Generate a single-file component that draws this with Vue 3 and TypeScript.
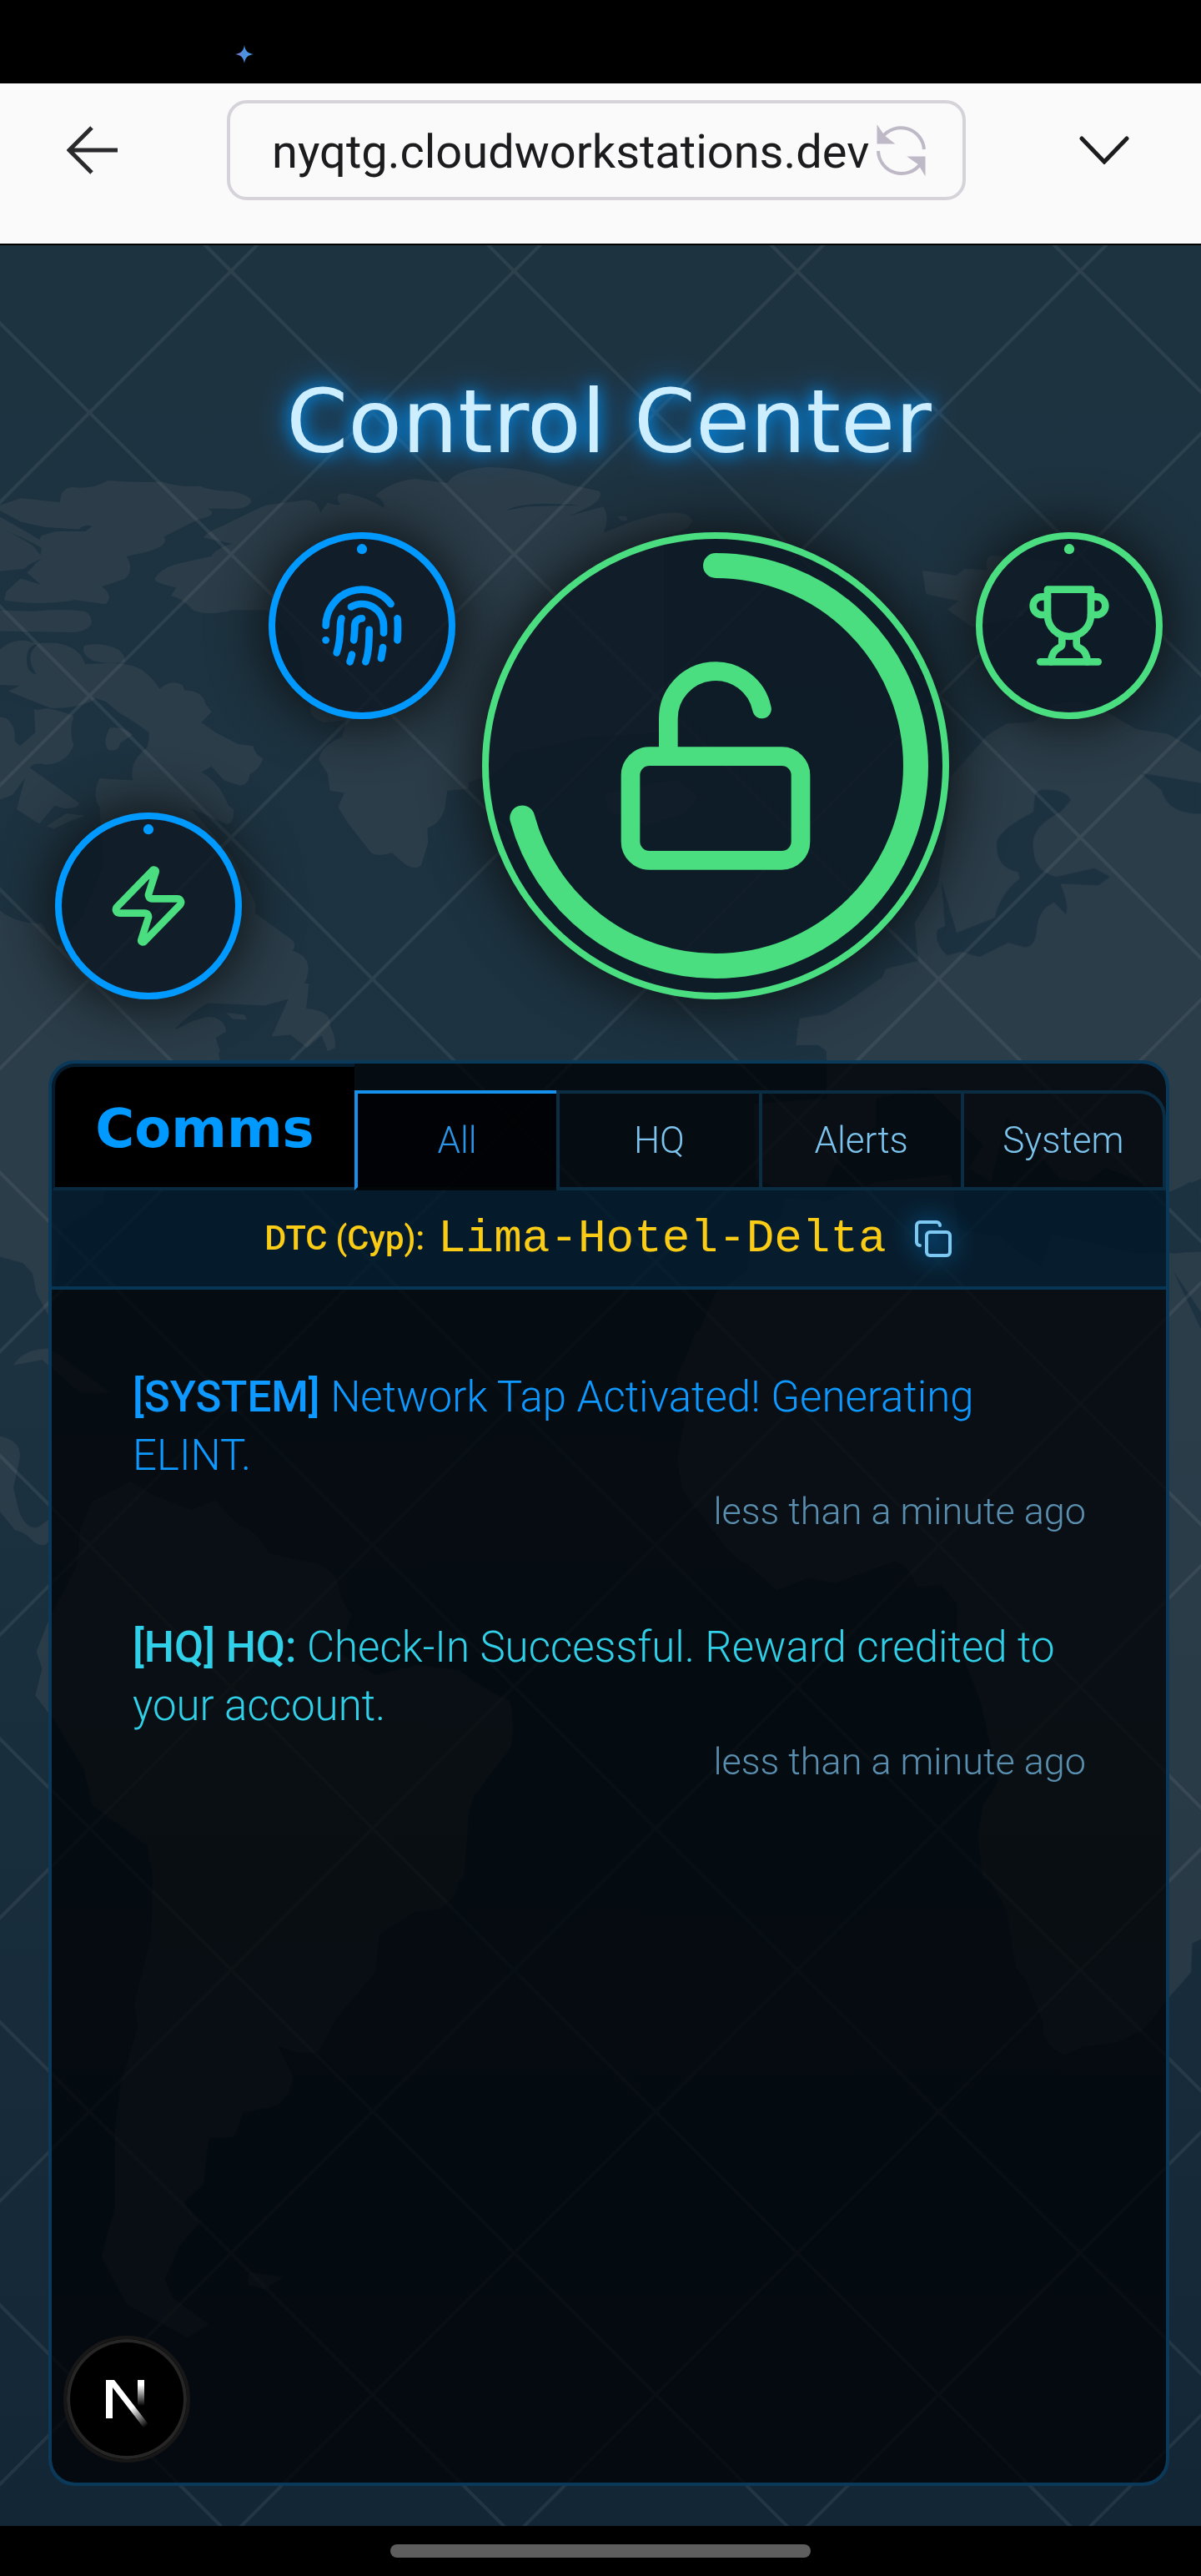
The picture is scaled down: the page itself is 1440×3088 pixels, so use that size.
<script setup lang="ts">
import { ref } from 'vue'

interface Dial {
  id: string
  label: string
  ring: string
  icon: string
  large?: boolean
  low?: boolean
  progress: number
  paths: string[]
}

interface Message {
  id: number
  tone: string
  source: string
  body: string
  time: string
}

const address = ref('nyqtg.cloudworkstations.dev')
const tabs = ['All', 'HQ', 'Alerts', 'System']
const activeTab = ref('All')

const blue = '#0099ff'
const green = '#4ade80'

const dials: Dial[] = [
  {
    id: 'power',
    label: 'Power',
    ring: blue,
    icon: green,
    low: true,
    progress: 0,
    paths: [
      'M4 14a1 1 0 0 1-.78-1.63l9.9-10.2a.5.5 0 0 1 .86.46l-1.92 6.02A1 1 0 0 0 13 10h7a1 1 0 0 1 .78 1.63l-9.9 10.2a.5.5 0 0 1-.86-.46l1.92-6.02A1 1 0 0 0 11 14z',
    ],
  },
  {
    id: 'identity',
    label: 'Identity',
    ring: blue,
    icon: blue,
    progress: 0,
    paths: [
      'M12 10a2 2 0 0 0-2 2c0 1.02-.1 2.51-.26 4',
      'M14 13.12c0 2.38 0 6.38-1 8.88',
      'M17.29 21.02c.12-.6.43-2.3.5-3.02',
      'M2 12a10 10 0 0 1 18-6',
      'M2 16h.01',
      'M21.8 16c.2-2 .131-5.354 0-6',
      'M5 19.5C5.5 18 6 15 6 12a6 6 0 0 1 .34-2',
      'M8.65 22c.21-.66.45-1.32.57-2',
      'M9 6.8a6 6 0 0 1 9 5.2v2',
    ],
  },
  {
    id: 'vault',
    label: 'Vault',
    ring: green,
    icon: green,
    large: true,
    progress: 0.708,
    paths: [
      'M5 11h14a2 2 0 0 1 2 2v7a2 2 0 0 1-2 2H5a2 2 0 0 1-2-2v-7a2 2 0 0 1 2-2z',
      'M7 11V7a5 5 0 0 1 9.9-1',
    ],
  },
  {
    id: 'rewards',
    label: 'Rewards',
    ring: green,
    icon: green,
    progress: 0,
    paths: [
      'M6 9H4.5a2.5 2.5 0 0 1 0-5H6',
      'M18 9h1.5a2.5 2.5 0 0 0 0-5H18',
      'M4 22h16',
      'M10 14.66V17c0 .55-.47.98-.97 1.21C7.85 18.75 7 20.24 7 22',
      'M14 14.66V17c0 .55.47.98.97 1.21C16.15 18.75 17 20.24 17 22',
      'M18 2H6v7a6 6 0 0 0 12 0V2Z',
    ],
  },
]

const messages: Message[] = [
  {
    id: 1,
    tone: 'system',
    source: '[SYSTEM]',
    body: 'Network Tap Activated! Generating ELINT.',
    time: 'less than a minute ago',
  },
  {
    id: 2,
    tone: 'hq',
    source: '[HQ] HQ:',
    body: 'Check-In Successful. Reward credited to your account.',
    time: 'less than a minute ago',
  },
]
</script>

<template>
  <div class="device">
    <div class="status">
      <svg class="spark" viewBox="0 0 22 22" aria-hidden="true">
        <defs>
          <linearGradient id="sparkFill" x1="0" y1="0" x2="1" y2="0">
            <stop offset="0" stop-color="#8a7bc8" />
            <stop offset=".5" stop-color="#4a90e2" />
            <stop offset="1" stop-color="#4a9be8" />
          </linearGradient>
        </defs>
        <path fill="url(#sparkFill)" d="M11 0c1 7 4 10 11 11-7 1-10 4-11 11-1-7-4-10-11-11 7-1 10-4 11-11z" />
      </svg>
    </div>

    <header class="toolbar">
      <button class="tool" type="button" aria-label="Back">
        <svg width="62" height="58" viewBox="0 0 62 58" fill="none" stroke="#2a2a2c" stroke-width="5">
          <path d="M61 29H4M30 2L3 29l27 27" />
        </svg>
      </button>
      <div class="address">
        <input v-model="address" type="text" aria-label="Address" spellcheck="false" />
        <button class="tool" type="button" aria-label="Reload">
          <svg width="62" height="62" viewBox="0 0 62 62" fill="none" stroke="#bfb8c6" stroke-width="4">
            <path id="turn" d="M8 15A28 28 0 0 1 58 30" />
            <path d="M3 5V22H19L10 15z" fill="#bfb8c6" stroke-width="3" />
            <path d="M54 47A28 28 0 0 1 3 32" />
            <path d="M58 57V40H42L52 47z" fill="#bfb8c6" stroke-width="3" />
          </svg>
        </button>
      </div>
      <button class="tool" type="button" aria-label="More">
        <svg width="60" height="34" viewBox="0 0 60 34" fill="none" stroke="#1c1c1e" stroke-width="5">
          <path d="M3 3l27 28L57 3" stroke-linecap="round" />
        </svg>
      </button>
    </header>

    <main class="page">
      <svg class="map" viewBox="0 0 1440 2734" preserveAspectRatio="xMidYMin slice" aria-hidden="true">
        <defs>
          <pattern
            id="mesh"
            width="240"
            height="240"
            patternUnits="userSpaceOnUse"
            patternTransform="translate(277 31) rotate(45) translate(-120 -120)"
          >
            <path d="M120 0V240M0 120H240" stroke="#fff" stroke-width="4" stroke-opacity=".07" />
          </pattern>
        </defs>
        <g class="land">
          <!-- north-west coast and islands -->
          <g transform="translate(0 246) scale(.4974)">
            <path d="M-10 135L50 115Q100 120 145 125Q145 90 175 88Q220 95 260 72Q330 78 390 75Q440 90 480 85Q520 100 560 98Q610 110 605 125Q590 145 545 140H500Q530 155 480 165L440 185L395 208Q410 230 350 245L305 255Q325 290 300 310L245 328Q275 350 255 370L180 360Q90 375 10 360L15 340L75 285Q100 260 100 235Q60 210 -10 185z" />
            <path d="M-10 180Q50 210 80 230L105 262L60 285L-10 292z" />
            <path d="M-10 385L80 388Q150 380 205 388Q225 400 220 420Q200 440 170 438L-10 435z" />
            <path d="M202 470Q250 460 285 480Q305 495 300 510Q260 515 230 508Q195 495 202 470z" />
            <path d="M-10 490Q20 455 60 458L90 465Q130 460 155 468Q195 480 205 515L270 512Q330 515 350 535Q370 550 385 575Q410 550 440 565L445 578Q490 580 495 610L510 630L485 655L520 680L575 708L610 712Q615 735 634 742Q625 770 602 780Q600 805 580 808L540 795L510 762L485 775Q530 800 550 855L563 865Q565 900 545 900L460 862L560 980L615 1090L615 1115L705 1180Q715 1195 705 1205Q750 1220 742 1260Q735 1300 700 1320L640 1337L500 1332Q440 1370 412 1405Q450 1375 500 1365Q540 1365 545 1400L520 1415L530 1470V1600H-10V1100Q30 1140 100 1140L185 1270L135 1200L200 1120L250 1000L240 860Q220 830 240 790L320 795Q310 750 355 715L360 680L310 645L230 600Q180 625 110 620L0 590z" />
            <path d="M82 618Q130 620 178 640Q165 680 178 710Q160 755 110 757Q80 750 72 765L192 850Q185 865 150 862L132 855L95 900L40 865L60 790L30 830L-10 845V640L15 645Q40 665 35 700L48 712L85 680z" />
            <path d="M265 668Q300 665 320 685L290 705Q285 728 262 722Q245 705 265 668z" />
            <path d="M112 905L160 875L205 880L165 895L130 912z" />
            <path d="M655 1412L700 1310Q720 1280 745 1285L738 1345Q800 1350 795 1385Q810 1410 808 1440L790 1448L775 1410L740 1440L700 1408z" />
            <path d="M545 1355L590 1360L595 1372L560 1370z" />
            <path d="M372 310Q390 280 440 270L510 255Q520 235 560 225L490 210Q500 195 540 180Q600 150 640 132L730 120Q765 115 772 150L790 125Q815 135 820 130Q800 100 840 104Q890 115 925 138Q930 125 905 108Q940 75 1000 68L1078 78Q1100 45 1180 40Q1300 45 1355 78L1445 98Q1460 125 1370 158L1455 135Q1470 165 1455 198L1500 180Q1550 160 1600 150V680L1420 690L1240 730L1200 775L1130 800V815L1078 820L1072 865Q1060 900 1030 910L1032 945L1015 1000Q995 1015 968 990L945 970Q910 980 895 970L840 900L815 860L830 825L795 820L790 780L768 745Q775 710 825 690L835 650L780 655Q740 640 750 615L720 470L660 395L640 385L560 385Q500 400 465 385Q440 355 412 350L425 330Q375 320 372 310z" />
            <path d="M1488 158L1510 158L1512 168L1498 170z" />
          </g>
          <!-- north-east mainland -->
          <g transform="translate(720 306) scale(.4592 .4082)">
            <path d="M0 180Q60 220 80 270L125 300L90 360L40 520L0 640z" />
            <path d="M40 95L150 40Q230 25 240 60Q230 100 120 110z" />
            <path d="M840 205L930 220L950 200L1010 205Q1000 160 1030 162L1210 180L1170 230L1100 340L970 372L905 320L935 295L850 275z" />
            <path d="M510 1600L520 1520L590 1508L640 1475L735 1400L745 1375L830 1352L820 1240L880 1130L900 1000L915 810L1010 690L1060 655L1130 650L1180 600L1240 590L1320 620L1400 672L1480 685L1600 760V1600z" />
            <path d="M10 860L100 840L200 820L255 870L220 920L120 955L20 910z" />
          </g>
          <!-- western mainland -->
          <g transform="translate(0 946) scale(.4592 .3333)">
            <path d="M0-20H555L575 60L510 150L300 300L270 600L160 700L130 1020L95 930L85 860L60 822L0 800z" />
            <path d="M35 1190Q60 1130 130 1130L290 1290L210 1290L110 1170z" />
          </g>
          <!-- eastern mainland -->
          <g transform="translate(720 946) scale(.4592 .3333)">
            <path d="M510-20L590 60V230L400 250L405 520L480 560L580 560L640 400L720 330V230L850 190L1000 400L960 480L1020 530L1060 300L1200 520L1270 530L1320 480L1480 570L1600 500V-20z" />
            <path d="M205 1240L300 930L385 850L390 760L475 650L480 590L590 600L720 530L915 505L935 700L1040 730L1150 840L1180 720L1400 790L1600 780V1240z" />
          </g>
          <!-- southern continents -->
          <g transform="translate(0 1306) scale(.4592 .4082)">
            <path d="M0 298Q55 310 52 360L35 450L50 520Q70 575 100 565L130 540V600Q120 630 90 610Q60 575 40 575L0 520z" />
            <path d="M210 570L240 490L340 430L400 470L500 515L560 485L625 560Q670 570 700 640L780 662Q870 670 885 740Q890 790 920 820L880 930L980 1000L1090 970L1200 985Q1260 1040 1330 1075Q1350 1160 1330 1220L1240 1350L1225 1400L1210 1600H400L385 1500L240 1380L220 1280L140 1130L92 1060L110 980L95 930L130 830L200 680z" />
          </g>
          <g transform="translate(720 1306) scale(.4592 .4082)">
            <path d="M250-10L198 130L220 250L200 370L215 460L310 600Q350 660 380 670L460 750L540 715L610 730L770 665Q810 680 825 740L890 735L930 790V900L990 1070L1040 1310L1000 1380L985 1470L1000 1600H1600V-10z" />
          </g>
          <g transform="translate(0 1946) scale(.4592 .5408)">
            <path d="M400-10H1210L1190 55L1150 90L1085 95L990 145L980 230L880 330L830 408H775L725 393L765 460Q755 530 680 532L635 540L610 595L545 597L530 700L480 740L520 785L470 835L430 910L450 950L545 1010L490 1040L330 965L265 860L300 750L300 580L315 480L360 350L350 300L395 150z" />
            <path d="M650 895L740 905L690 932L648 922z" />
          </g>
          <g transform="translate(720 1946) scale(.4592 .5408)">
            <path d="M990-10L1060 90L1085 220L1110 245L1155 340Q1150 390 1210 412L1260 395L1350 385L1420 355L1485 285L1542 230L1545 165L1600 145V-10z" />
          </g>
        </g>
        <!-- inland seas -->
        <g class="sea">
          <g transform="translate(720 306) scale(.4592 .4082)">
            <path d="M1150 850Q1215 845 1228 880L1200 915Q1120 960 1130 1020Q1130 1090 1190 1105L1290 1080L1330 1105L1300 1130L1200 1125Q1225 1190 1215 1215L1185 1180Q1140 1200 1138 1270Q1130 1320 1100 1310L1065 1298L990 1340L940 1325L905 1335Q870 1300 880 1260L900 1250L890 1120L930 1270L1030 1225Q1040 1160 1095 1110L1090 1090Q1030 1080 1035 1000Q1050 960 1130 915L1135 860z" />
            <path d="M1410 800L1568 830V920Q1480 920 1465 850z" />
          </g>
          <g transform="translate(720 946) scale(.4592 .3333)">
            <path d="M1485 575L1540 530L1560 560V720Q1540 800 1485 785z" />
            <path d="M1495 850L1568 1000V1060z" />
          </g>
          <g transform="translate(0 246) scale(.4974)">
            <path d="M0 145L50 172L85 180L110 185L190 190Q205 175 222 183L205 195L135 195L100 205L95 215L70 200L0 160z" />
            <path d="M35 305L70 275L102 260L60 290L98 323L55 310z" />
            <path d="M65 510Q60 470 95 465Q55 490 88 540Q65 535 65 510z" />
            <path d="M0 565L48 567L20 580L120 620L90 625L0 595z" />
            <path d="M1220 145Q1260 120 1395 132L1270 135z" />
            <path d="M225 595L255 605L325 665L360 695L350 720L300 660L240 615z" />
          </g>
        </g>
        <rect width="1440" height="2734" fill="url(#mesh)" />
      </svg>

      <h1>Control Center</h1>

      <section class="dials" aria-label="Controls">
        <button
          v-for="dial in dials"
          :key="dial.id"
          type="button"
          class="dial"
          :class="{ large: dial.large, low: dial.low }"
          :style="{ borderColor: dial.ring, color: dial.icon }"
          :aria-label="dial.label"
        >
          <svg class="ring" viewBox="0 0 544 544" fill="none">
            <circle
              v-if="dial.large"
              cx="272"
              cy="272"
              r="240"
              :stroke="dial.ring"
              stroke-width="30"
              stroke-linecap="round"
              pathLength="1"
              :stroke-dasharray="`${dial.progress} 1`"
              transform="rotate(-90 272 272)"
            />
            <circle v-else cx="272" cy="32" r="16" :fill="dial.ring" />
          </svg>
          <svg
            class="glyph"
            viewBox="0 0 24 24"
            fill="none"
            stroke="currentColor"
            stroke-width="2"
            stroke-linecap="round"
            stroke-linejoin="round"
          >
            <path v-for="d in dial.paths" :key="d" :d="d" />
          </svg>
        </button>
      </section>

      <section class="comms">
        <div class="head">
          <h2>Comms</h2>
          <div class="tabs" role="tablist">
            <button
              v-for="tab in tabs"
              :key="tab"
              type="button"
              role="tab"
              :aria-selected="activeTab === tab"
              :class="{ active: activeTab === tab }"
              @click="activeTab = tab"
            >
              {{ tab }}
            </button>
          </div>
        </div>

        <div class="code">
          <strong>DTC (Cyp):</strong>
          <span>Lima-Hotel-Delta</span>
          <button class="copy" type="button" aria-label="Copy code">
            <svg
              width="48"
              height="48"
              viewBox="0 0 24 24"
              fill="none"
              stroke="currentColor"
              stroke-width="2"
              stroke-linecap="round"
              stroke-linejoin="round"
            >
              <rect x="8" y="8" width="14" height="14" rx="2" />
              <path d="M4 16c-1.1 0-2-.9-2-2V4c0-1.1.9-2 2-2h10c1.1 0 2 .9 2 2" />
            </svg>
          </button>
        </div>

        <ul class="feed">
          <li v-for="message in messages" :key="message.id" :class="message.tone">
            <p><b>{{ message.source }}</b> {{ message.body }}</p>
            <time>{{ message.time }}</time>
          </li>
        </ul>
      </section>

      <button class="badge" type="button" aria-label="Developer tools">
        <svg width="50" height="58" viewBox="0 0 50 58" fill="none">
          <defs>
            <linearGradient id="slant" x1="30" y1="34" x2="48" y2="56" gradientUnits="userSpaceOnUse">
              <stop stop-color="#fff" />
              <stop offset="1" stop-color="#fff" stop-opacity="0" />
            </linearGradient>
            <linearGradient id="stem" x1="0" y1="0" x2="0" y2="31" gradientUnits="userSpaceOnUse">
              <stop offset=".2" stop-color="#fff" />
              <stop offset="1" stop-color="#fff" stop-opacity="0" />
            </linearGradient>
          </defs>
          <path d="M0 0h10l41 53-6 4L8 9v37H0z" fill="url(#slant)" />
          <path d="M38 0h8v31h-8z" fill="url(#stem)" />
        </svg>
      </button>
    </main>

    <footer class="gesture"><span></span></footer>
  </div>
</template>

<style>
body {
  margin: 0;
  background: #000;
}
</style>

<style scoped>
.device {
  display: flex;
  flex-direction: column;
  min-height: 100vh;
  background: #000;
  font-family: Roboto, 'Liberation Sans', sans-serif;
  font-weight: 300;
}

button {
  margin: 0;
  padding: 0;
  border: 0;
  background: none;
  color: inherit;
  font: inherit;
  cursor: pointer;
}

svg {
  display: block;
}

.status {
  display: flex;
  align-items: flex-end;
  height: 100px;
  padding: 0 282px 24px;
  box-sizing: border-box;
}

.spark {
  width: 22px;
  height: 22px;
}

.toolbar {
  display: flex;
  align-items: center;
  height: 192px;
  margin-bottom: 2px;
  padding: 0 86px 32px 80px;
  box-sizing: border-box;
  background: #fafafa;
}

.address {
  display: flex;
  align-items: center;
  flex: 0 1 886px;
  height: 120px;
  margin: 0 auto 0 130px;
  padding: 0 42px 0 50px;
  box-sizing: border-box;
  border: 4px solid #d6d2da;
  border-radius: 24px;
}

.address input {
  flex: 1;
  min-width: 0;
  padding: 4px 0 0;
  border: 0;
  outline: 0;
  background: none;
  color: #1c1c1e;
  font: 400 56px/64px Roboto, sans-serif;
}

.page {
  position: relative;
  display: flex;
  flex: 1;
  flex-direction: column;
  padding: 148px 38px 48px 58px;
  background: linear-gradient(#1e3340, #1c3241 50%, #132635);
}

.map {
  position: absolute;
  inset: 0;
  width: 100%;
  height: 100%;
}

.land {
  fill: #3a4953;
  opacity: 0.5;
}

.sea {
  fill: #1d3241;
}

h1 {
  position: relative;
  margin: 0 0 68px;
  color: #cceeff;
  font: 400 106px/128px 'DejaVu Sans', sans-serif;
  text-align: center;
  text-shadow: 0 0 20px #0099ff, 0 0 40px #0084e6;
}

.dials {
  position: relative;
  display: flex;
  justify-content: center;
  gap: 32px;
  margin-bottom: 73px;
}

.dial {
  position: relative;
  display: flex;
  align-items: center;
  justify-content: center;
  width: 224px;
  height: 224px;
  box-sizing: border-box;
  border: 8px solid;
  border-radius: 50%;
  background: rgba(11, 22, 34, 0.8);
  background-clip: padding-box;
  box-shadow: 0 0 60px 10px rgba(15, 20, 23, 0.95);
}

.dial.large {
  width: 560px;
  height: 560px;
}

.dial.low {
  align-self: flex-end;
}

.ring {
  position: absolute;
  inset: 0;
  width: 100%;
  height: 100%;
}

.glyph {
  width: 50%;
  height: 50%;
}

.comms {
  position: relative;
  display: flex;
  flex: 1;
  flex-direction: column;
  overflow: hidden;
  border: 4px solid #0a395a;
  border-radius: 32px;
  background: rgba(0, 3, 5, 0.78);
  background-clip: padding-box;
}

.head {
  display: flex;
  align-items: flex-end;
}

h2 {
  width: 363px;
  margin: 0;
  padding-top: 4px;
  box-sizing: border-box;
  border: 4px solid #041c2e;
  border-right: 0;
  border-bottom-color: #0a2a40;
  border-top-left-radius: 28px;
  background: #000;
  color: #0099ff;
  font: 700 64px/140px 'DejaVu Sans', sans-serif;
  text-align: center;
}

.tabs {
  display: flex;
  flex: 1;
}

.tabs button {
  flex: 1;
  height: 120px;
  box-sizing: border-box;
  border: 4px solid #0b2d44;
  border-right-width: 0;
  color: #7cc4ee;
  font-size: 44px;
  line-height: 112px;
}

.tabs button:last-child {
  border-right-width: 4px;
  border-top-right-radius: 32px;
}

.tabs button.active {
  border-color: #1590ec;
  border-bottom-color: #010609;
  background: rgba(0, 0, 2, 0.8);
  color: #2a95e6;
}

.code {
  display: flex;
  align-items: center;
  justify-content: center;
  height: 119px;
  box-sizing: border-box;
  border-bottom: 4px solid #073556;
  background: rgba(0, 90, 150, 0.2);
  color: #facc15;
}

.code strong {
  margin-right: 16px;
  font-size: 40px;
  font-weight: 500;
}

.code span {
  font: 400 56px/64px 'Liberation Mono', monospace;
}

.copy {
  margin-left: 32px;
  color: #7cc8f2;
  filter: drop-shadow(0 0 14px #0088e6);
}

.feed {
  margin: 0;
  padding: 94px 96px 0 97px;
  list-style: none;
}

.feed li {
  display: flex;
  flex-direction: column;
  margin-bottom: 96px;
}

.feed p {
  margin: 0;
  font-size: 51px;
  line-height: 70px;
}

.feed b {
  font-weight: 500;
}

.feed time {
  align-self: flex-end;
  color: #5a8fb0;
  font-size: 45px;
  line-height: 64px;
}

.system {
  color: #0d99ff;
}

.hq {
  color: #30d0e8;
}

.badge {
  position: absolute;
  bottom: 76px;
  left: 76px;
  display: flex;
  align-items: center;
  justify-content: center;
  width: 152px;
  height: 152px;
  padding: 12px 0 0;
  box-sizing: border-box;
  border: 4px solid #171717;
  border-radius: 50%;
  background: #000;
  box-shadow: inset 0 0 0 4px #262626;
}

.gesture {
  display: flex;
  align-items: center;
  justify-content: center;
  height: 60px;
}

.gesture span {
  width: 504px;
  height: 16px;
  border-radius: 8px;
  background: #5e5e5e;
}
</style>
